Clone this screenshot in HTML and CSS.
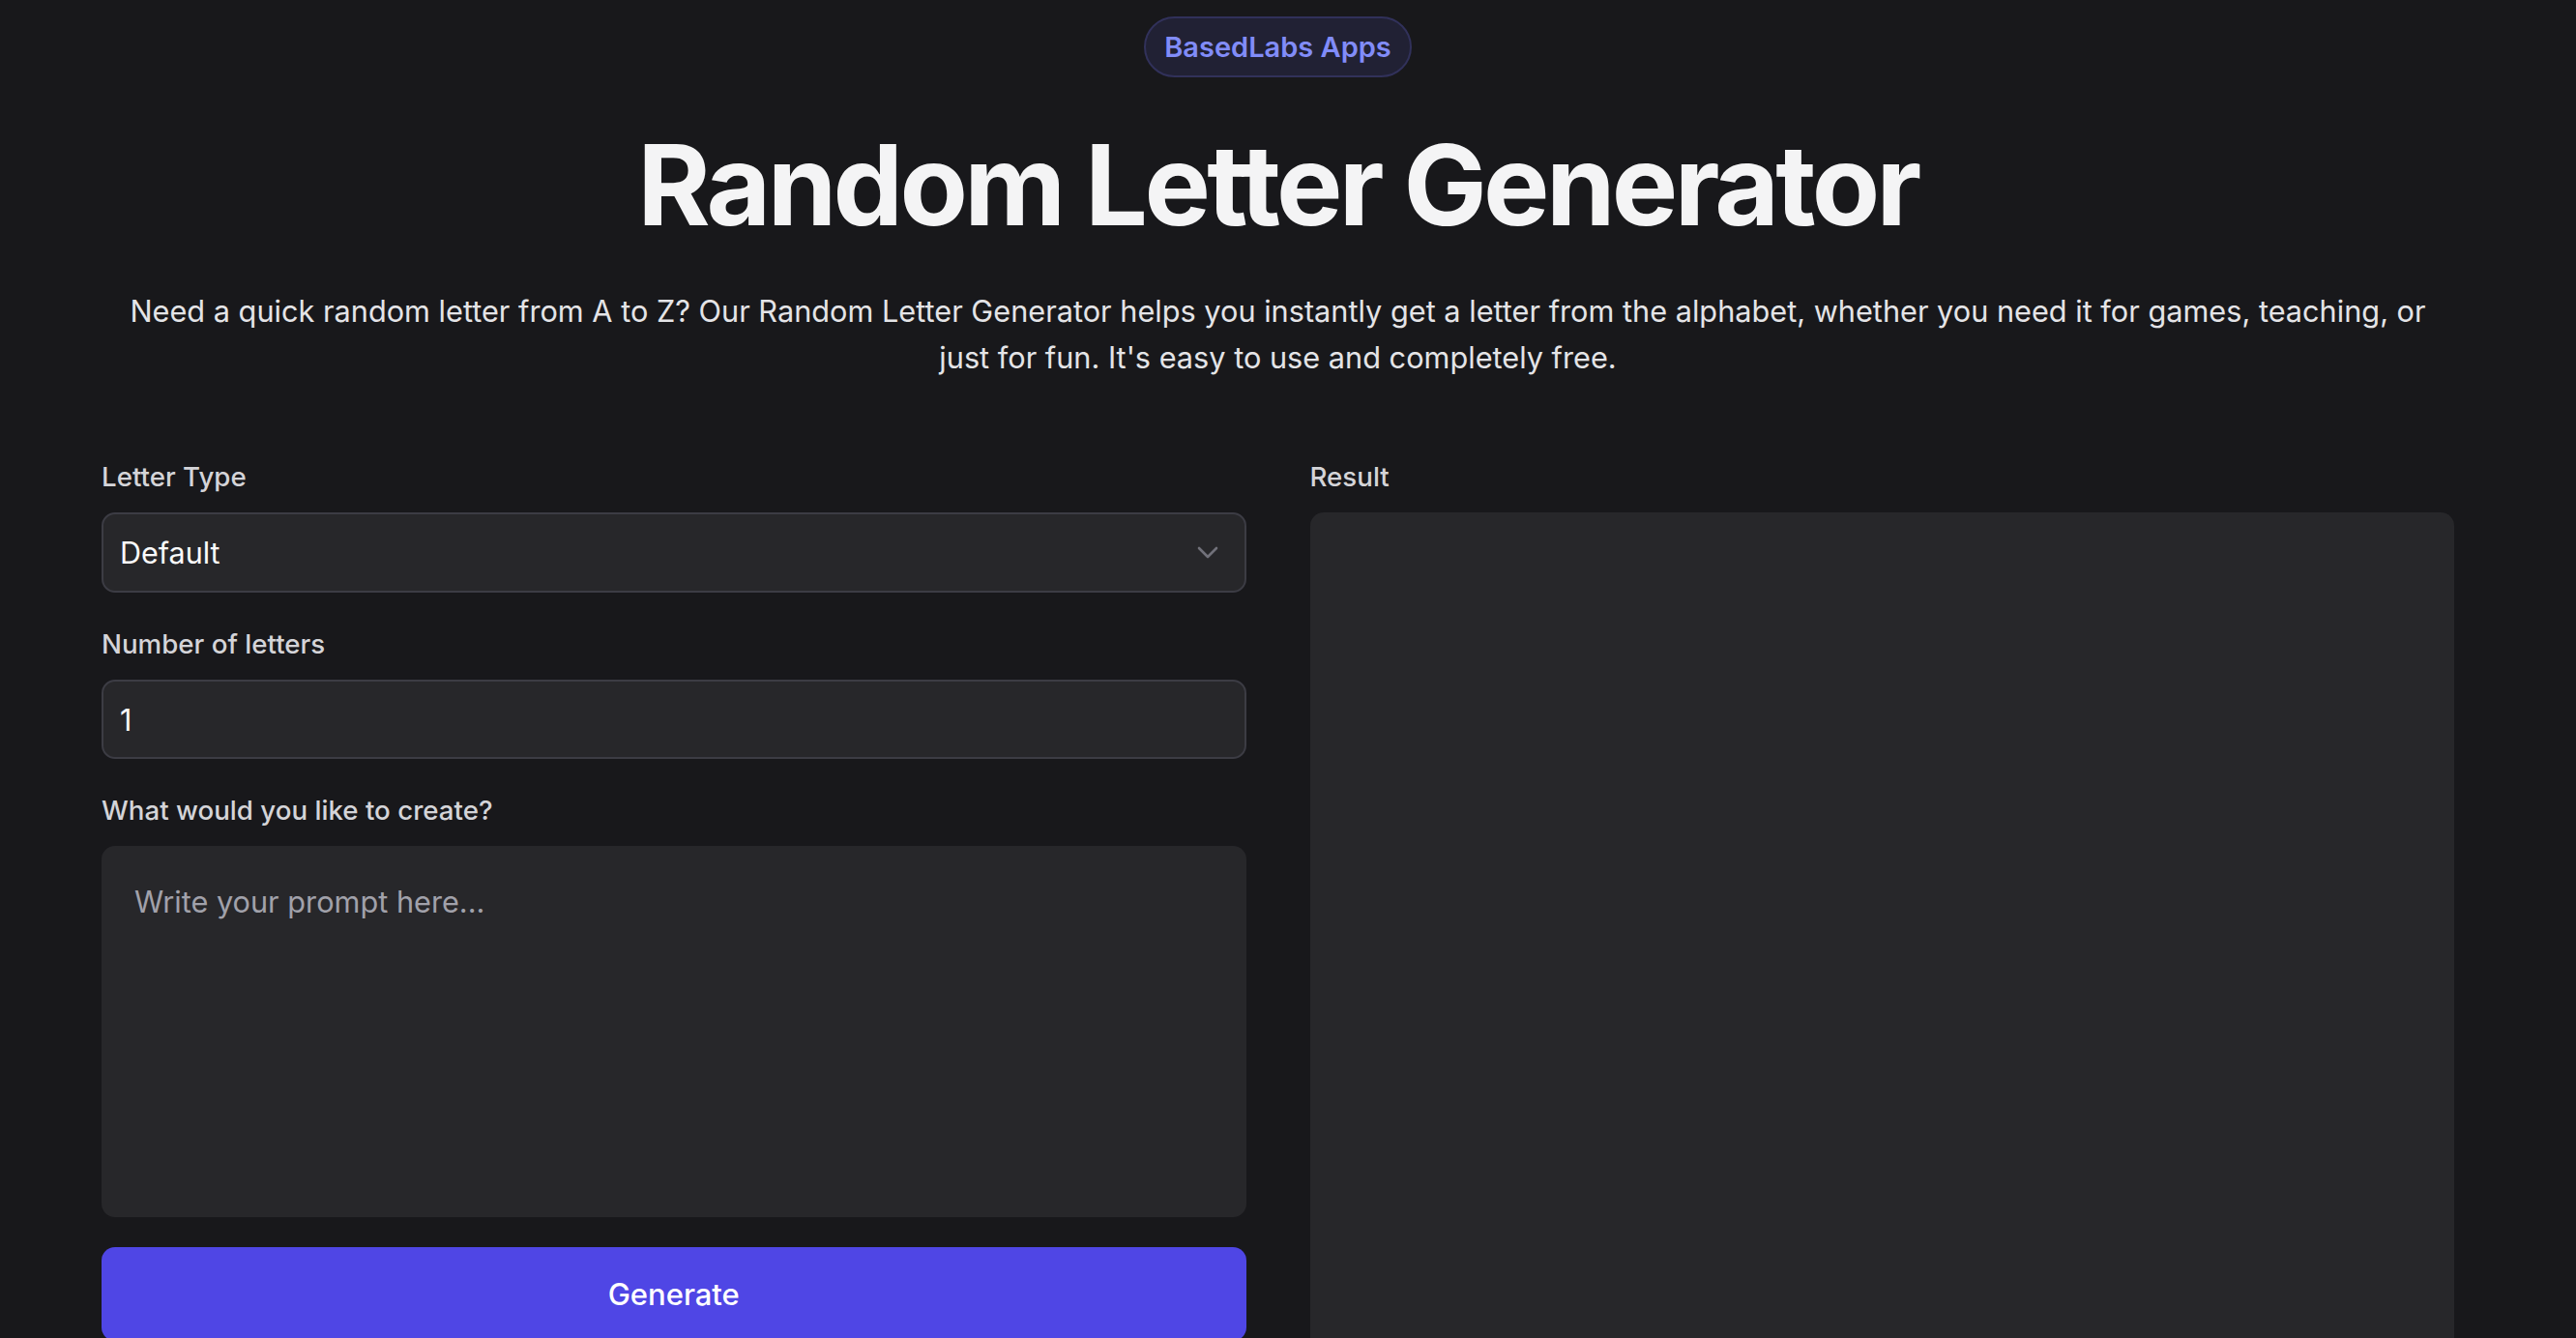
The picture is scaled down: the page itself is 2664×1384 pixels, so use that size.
FILE: index.html
```html
<!DOCTYPE html>
<html lang="en">
<head>
  <meta charset="UTF-8">
  <meta name="viewport" content="width=device-width, initial-scale=1.0">
  <title>Random Letter Generator</title>
  <link rel="stylesheet" href="styles.css">
</head>
<body>
  <main class="page">
    <header class="intro">
      <span class="badge">BasedLabs Apps</span>
      <h1 class="title">Random Letter Generator</h1>
      <p class="lead">Need a quick random letter from A to Z? Our Random Letter Generator helps you instantly get a letter from the alphabet, whether you need it for games, teaching, or just for fun. It's easy to use and completely free.</p>
    </header>

    <section class="tool">
      <form class="tool-form" onsubmit="return false">
        <div class="field">
          <label for="letterType">Letter Type</label>
          <div class="select-wrap">
            <select id="letterType" class="control">
              <option>Default</option>
              <option>Uppercase</option>
              <option>Lowercase</option>
            </select>
            <svg class="chevron" width="22" height="13" viewBox="0 0 22 13" fill="none">
              <polyline points="2,2 11,11 20,2" stroke="#71717a" stroke-width="2.6" stroke-linecap="round" stroke-linejoin="round"/>
            </svg>
          </div>
        </div>

        <div class="field">
          <label for="count">Number of letters</label>
          <input id="count" class="control" type="text" value="1">
        </div>

        <div class="field">
          <label for="prompt">What would you like to create?</label>
          <textarea id="prompt" class="prompt" placeholder="Write your prompt here..."></textarea>
        </div>

        <button type="submit" class="generate">Generate</button>
      </form>

      <div class="result">
        <span class="result-label">Result</span>
        <div class="result-box"></div>
      </div>
    </section>
  </main>
</body>
</html>
```

FILE: styles.css
```css
body {
  margin: 0;
  padding: 0 21px 0 0;
  background-color: #18181b;
  color: #e4e4e7;
  font-family: Inter, 'Noto Sans', sans-serif;
}

.page {
  max-width: 2433px;
  margin: 0 auto;
  padding-top: 17px;
}

.intro {
  display: flex;
  flex-direction: column;
  align-items: center;
  text-align: center;
}

.badge {
  display: inline-block;
  box-sizing: border-box;
  height: 63px;
  line-height: 59px;
  padding: 0 19px;
  border: 2px solid #31315a;
  border-radius: 999px;
  background-color: #212134;
  color: #818cf8;
  font-size: 29px;
  font-weight: 600;
}

.title {
  margin: 54px 0 0;
  font-size: 115px;
  line-height: 115px;
  font-weight: 700;
  letter-spacing: -0.032em;
  color: #f4f4f5;
}

.lead {
  max-width: 2410px;
  margin: 49px 0 0;
  font-size: 30.7px;
  line-height: 48px;
  color: #e4e4e7;
}

.tool {
  display: grid;
  grid-template-columns: 1fr 1fr;
  gap: 66px;
  margin-top: 79px;
}

.tool-form {
  display: flex;
  flex-direction: column;
}

.field {
  display: flex;
  flex-direction: column;
  margin-bottom: 33px;
}

.field:last-of-type {
  margin-bottom: 31px;
}

label,
.result-label {
  display: block;
  margin-bottom: 16px;
  font-size: 27.7px;
  line-height: 41px;
  font-weight: 500;
  color: #d4d4d8;
}

.select-wrap {
  position: relative;
}

.control {
  width: 100%;
  height: 83px;
  box-sizing: border-box;
  padding: 0 17px;
  border: 2px solid #3c3c44;
  border-radius: 14px;
  background-color: #27272a;
  color: #fafafa;
  font-family: inherit;
  font-size: 30.5px;
  outline: none;
  appearance: none;
  -webkit-appearance: none;
}

#count {
  height: 82px;
}

.chevron {
  position: absolute;
  right: 29px;
  top: 35px;
  pointer-events: none;
}

.prompt {
  height: 384px;
  box-sizing: border-box;
  padding: 35px 34px;
  border: none;
  border-radius: 14px;
  background-color: #27272a;
  color: #fafafa;
  font-family: inherit;
  font-size: 30.7px;
  line-height: 45px;
  resize: none;
  outline: none;
}

.prompt::placeholder {
  color: #a1a1aa;
}

.generate {
  height: 97px;
  border: none;
  border-radius: 14px;
  background-color: #4f46e5;
  color: #fff;
  font-family: inherit;
  font-size: 31px;
  font-weight: 500;
  cursor: pointer;
}

.result {
  display: flex;
  flex-direction: column;
}

.result-box {
  height: 1000px;
  border-radius: 14px;
  background-color: #27272a;
}
```
